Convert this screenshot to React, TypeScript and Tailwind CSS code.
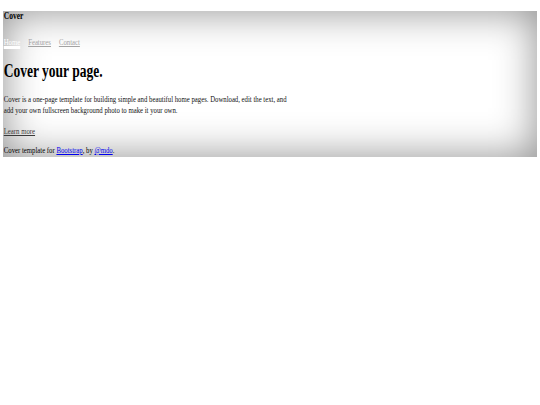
import React from "react";

const navItems = [
  { label: "Home", active: true },
  { label: "Features", active: false },
  { label: "Contact", active: false },
];

export default function App() {
  return (
    <div className="min-h-[405px] w-full bg-white px-[3px] pt-[11px] font-['Liberation_Serif',serif] text-black">
      {/* cover box with the inset shadow */}
      <div className="h-[146px] w-full overflow-hidden bg-white shadow-[inset_0_0_40px_rgba(0,0,0,0.45)]">
        {/* the screenshot is squeezed sideways, so the content is too */}
        <div className="flex w-[712px] origin-top-left scale-x-[0.75] flex-col pl-[1px]">
          <header>
            <h3 className="text-[10px] leading-[10px] font-bold">Cover</h3>
            <nav className="mt-[16px] flex gap-[10.5px] text-[9px] leading-[10px]">
              {navItems.map((item) => (
                <a
                  key={item.label}
                  href="#"
                  className={
                    item.active
                      ? "border-b-2 border-white text-white underline"
                      : "border-b-2 border-transparent text-[#a3a3a3] underline"
                  }
                >
                  {item.label}
                </a>
              ))}
            </nav>
          </header>

          <main>
            <h1 className="mt-[12px] text-[18px] leading-[20px] font-bold">Cover your page.</h1>
            <p className="mt-[13px] max-w-[385px] text-[9px] leading-[10.5px] text-[#111]">
              Cover is a one-page template for building simple and beautiful home pages. Download, edit the
              text, and add your own fullscreen background photo to make it your own.
            </p>
            <p className="mt-[11px] text-[9px] leading-[10px]">
              <a href="#" className="text-[#3a3a3a] underline">
                Learn more
              </a>
            </p>
          </main>

          <footer className="mt-[9px] text-[9px] leading-[10px]">
            <p>
              Cover template for{" "}
              <a href="#" className="text-[#0000ee] underline">
                Bootstrap
              </a>
              , by{" "}
              <a href="#" className="text-[#0000ee] underline">
                @mdo
              </a>
              .
            </p>
          </footer>
        </div>
      </div>
    </div>
  );
}
